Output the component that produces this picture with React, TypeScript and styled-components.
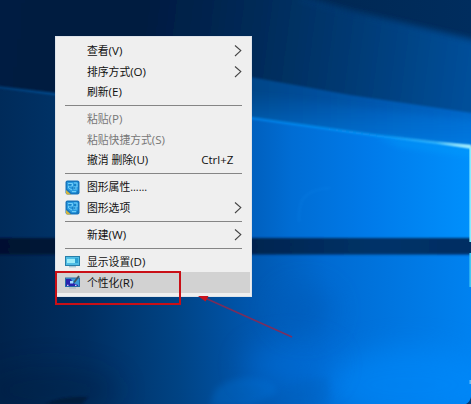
import React from "react";
import styled, { createGlobalStyle } from "styled-components";

const GlobalStyle = createGlobalStyle`
  html, body { margin: 0; padding: 0; overflow: hidden; }
`;

const Desktop = styled.main`
  position: relative;
  width: 471px;
  height: 404px;
  overflow: hidden;
  background: #002b5c;
  font-family: "Open Sans", "Noto Sans CJK SC", sans-serif;
`;

const WallpaperArt = styled.svg`
  position: absolute;
  inset: 0;
  display: block;
`;

const Menu = styled.ul`
  position: absolute;
  left: 55px;
  top: 36px;
  box-sizing: border-box;
  width: 196.5px;
  height: 261px;
  margin: 0;
  padding: 3.6px 1px 3px;
  border: 1px solid #dde3ea;
  background: #efefef;
  list-style: none;
  display: flex;
  flex-direction: column;
`;

const Row = styled.li<{ $active?: boolean; $disabled?: boolean }>`
  display: flex;
  align-items: center;
  flex: 0 0 20.65px;
  height: 20.65px;
  padding: 0 7.5px 0 8px;
  background: ${(p) => (p.$active ? "#d2d2d2" : "transparent")};
  color: ${(p) => (p.$disabled ? "#777" : "#111")};
  font-size: 10.8px;
  line-height: 20px;
  white-space: nowrap;
`;

const IconSlot = styled.span`
  display: flex;
  width: 22px;
  flex: none;
`;

const Label = styled.span`
  flex: 1;
`;

const AccessKey = styled.span`
  font-size: 11.6px;
  line-height: 1;
`;

const Hint = styled.span`
  margin-right: 8.5px;
  font-size: 11.6px;
`;

const Divider = styled.li`
  flex: 0 0 6.3px;
  display: flex;
  align-items: center;
  padding: 0 7.5px 0 8px;

  &::before {
    content: "";
    flex: 1;
    height: 1px;
    background: #858585;
  }
`;

const HighlightBox = styled.div`
  position: absolute;
  left: 55px;
  top: 271px;
  box-sizing: border-box;
  width: 126px;
  height: 34px;
  border: 2px solid #c90f16;
`;

const PointerArrow = styled.svg`
  position: absolute;
  left: 195px;
  top: 292px;
`;

function Wallpaper() {
  return (
    <WallpaperArt width="471" height="404" viewBox="0 0 471 404">
      <defs>
        <linearGradient id="night" x1="0" x2="471" y1="0" y2="0" gradientUnits="userSpaceOnUse">
          <stop offset="0" stopColor="#001c40" />
          <stop offset=".25" stopColor="#001739" />
          <stop offset=".55" stopColor="#00264f" />
          <stop offset="1" stopColor="#002d5e" />
        </linearGradient>
        <linearGradient id="ray" x1="0" x2="471" y1="0" y2="60" gradientUnits="userSpaceOnUse">
          <stop offset="0" stopColor="#001d42" />
          <stop offset=".3" stopColor="#001b40" />
          <stop offset=".55" stopColor="#002b59" />
          <stop offset=".75" stopColor="#003a74" />
          <stop offset="1" stopColor="#004f9a" />
        </linearGradient>
        <linearGradient id="beam" x1="251" x2="471" y1="0" y2="0" gradientUnits="userSpaceOnUse">
          <stop offset="0" stopColor="#004587" />
          <stop offset=".5" stopColor="#0055aa" />
          <stop offset="1" stopColor="#0068cb" />
        </linearGradient>
        <linearGradient id="glow" x1="0" x2="0" y1="0" y2="1">
          <stop offset="0" stopColor="#007de8" stopOpacity="0" />
          <stop offset="1" stopColor="#0084ee" stopOpacity=".8" />
        </linearGradient>
        <linearGradient id="pane" x1="0" x2="471" y1="0" y2="0" gradientUnits="userSpaceOnUse">
          <stop offset="0" stopColor="#002b5a" />
          <stop offset=".12" stopColor="#003266" />
          <stop offset=".53" stopColor="#005fbd" />
          <stop offset=".62" stopColor="#006dd4" />
          <stop offset=".78" stopColor="#007ae9" />
          <stop offset="1" stopColor="#0090fc" />
        </linearGradient>
        <linearGradient id="lower" x1="0" x2="471" y1="330" y2="300" gradientUnits="userSpaceOnUse">
          <stop offset="0" stopColor="#00234c" />
          <stop offset=".18" stopColor="#002e60" />
          <stop offset=".37" stopColor="#004384" />
          <stop offset=".53" stopColor="#0056ad" />
          <stop offset=".7" stopColor="#006bd2" />
          <stop offset="1" stopColor="#0082f0" />
        </linearGradient>
        <linearGradient id="bar" x1="0" x2="471" y1="0" y2="0" gradientUnits="userSpaceOnUse">
          <stop offset="0" stopColor="#001130" />
          <stop offset=".5" stopColor="#00224c" />
          <stop offset=".8" stopColor="#003368" />
          <stop offset="1" stopColor="#002d63" />
        </linearGradient>
        <linearGradient id="edge" x1="0" x2="471" y1="0" y2="0" gradientUnits="userSpaceOnUse">
          <stop offset="0" stopColor="#00417e" />
          <stop offset=".12" stopColor="#00529a" />
          <stop offset=".53" stopColor="#0085ee" />
          <stop offset=".82" stopColor="#0c9cfa" />
          <stop offset=".93" stopColor="#4cc8ff" />
          <stop offset="1" stopColor="#c5fbff" />
        </linearGradient>
        <filter id="soft1" filterUnits="userSpaceOnUse" x="-40" y="-40" width="560" height="500"><feGaussianBlur stdDeviation="1" /></filter>
        <filter id="soft3" filterUnits="userSpaceOnUse" x="-40" y="-40" width="560" height="500"><feGaussianBlur stdDeviation="3" /></filter>
        <filter id="soft12" filterUnits="userSpaceOnUse" x="-80" y="-40" width="660" height="560"><feGaussianBlur stdDeviation="14" /></filter>
      </defs>

      <rect width="471" height="404" fill="url(#night)" />
      <path d="M-20 -20H270L305 -2L350 12L400 23L490 44V260H-20Z" fill="url(#ray)" filter="url(#soft3)" />
      <path d="M300 -2Q385 22 475 42" fill="none" stroke="#00509a" strokeWidth="4" opacity=".3" filter="url(#soft3)" />
      <path d="M245 76L350 95L500 117V180H245Z" fill="url(#beam)" filter="url(#soft1)" />
      <path d="M245 92L350 106L490 122V160L370 140L245 120Z" fill="url(#glow)" filter="url(#soft3)" />
      <path d="M0 87L55 94L251 118L380 136L471 147V242H0Z" fill="url(#pane)" />
      <path d="M-10 86L55 94L251 118L380 136L480 148" fill="none" stroke="url(#edge)" strokeWidth="1.8" filter="url(#soft1)" />
      <path d="M375 136L480 150V158L400 147Z" fill="#00a4ff" opacity=".35" filter="url(#soft3)" />
      <path d="M436 142.5L471 145V148.5Z" fill="#b4faff" opacity=".8" filter="url(#soft1)" />
      <path d="M299 222C298 202 302 190 330 188" fill="none" stroke="#168bee" strokeWidth="3" opacity=".14" filter="url(#soft1)" />

      <rect y="250" width="471" height="154" fill="url(#lower)" />
      <ellipse cx="410" cy="385" rx="85" ry="38" fill="#008cff" opacity=".55" filter="url(#soft12)" />
      <ellipse cx="290" cy="365" rx="45" ry="22" fill="#0070de" opacity=".5" filter="url(#soft12)" />
      <ellipse cx="50" cy="390" rx="70" ry="24" fill="#001a3e" opacity=".35" filter="url(#soft12)" />
      <ellipse cx="305" cy="310" rx="30" ry="24" fill="#0059b5" opacity=".45" filter="url(#soft12)" />
      <path d="M215 390Q230 376 255 378Q280 382 276 394L250 406H210Z" fill="#007ce6" opacity=".25" filter="url(#soft3)" />
      <path d="M276 396L305 379L328 378L330 398L318 404H276Z" fill="#0060bd" opacity=".3" filter="url(#soft3)" />
      <path d="M45 404Q65 395 88 397L82 404Z" fill="#00142f" opacity=".6" filter="url(#soft1)" />

      <path d="M-20 238H500V254.5H-20Z" fill="url(#bar)" filter="url(#soft1)" />
      <path d="M470.2 147V242" stroke="#85edff" strokeWidth="1.6" />
      <path d="M470.2 253V287" stroke="#40c8f2" strokeWidth="1.6" />
      <path d="M469.5 381H471M469.5 383H471" stroke="#c6f5ff" />
      <path d="M471 397V404H466Q470 402 471 397Z" fill="#07396f" />
    </WallpaperArt>
  );
}

const GraphicsIcon = () => (
  <svg width="15" height="15" viewBox="0 0 15 15">
    <rect x=".5" y=".5" width="14" height="14" rx="2" fill="#1776bd" />
    <path d="M1 11V13Q1 14.5 3 14.5H6L1 10Z" fill="#d6b53b" />
    <path d="M2 2H13V10L11 13H7L2 9Z" fill="#2899df" />
    <path d="M3 3.5H7.5V6H3.5V8L7 10M9 3H12V7H8.5V9H12M7 11.5H11" fill="none" stroke="#70cdf7" strokeWidth="1" />
    <path d="M4 5H6M9 5H11M7 8H10" stroke="#0868ad" />
  </svg>
);

const DisplayIcon = () => (
  <svg width="15" height="13" viewBox="0 0 15 13">
    <rect x=".5" y="1.5" width="14" height="9" fill="#50bde5" stroke="#267ea9" />
    <path d="M2 4H10V8H2Z" fill="#9cecf8" />
    <path d="M10 3H13V8H10Z" fill="#2a9fd2" />
    <path d="M4 11.8H11" stroke="#8eb4c5" />
  </svg>
);

const PersonalizeIcon = () => (
  <svg width="15" height="15" viewBox="0 0 15 15">
    <rect x=".5" y="3" width="14" height="8.5" fill="#3c9bd7" stroke="#266caa" />
    <path d="M1 4H6L8 8L13 10V11H1Z" fill="#2922ad" />
    <path d="M5 6H8V8.5H5Z" fill="#a6d9ff" />
    <path d="M2 10.3H3.5M10 10.3H11.5" stroke="#fff" />
    <path d="M9 7.5L14 1" stroke="#42515b" strokeWidth="1.8" />
    <path d="M4 13H11" stroke="#a1b3bd" />
  </svg>
);

const Chevron = () => (
  <svg width="8" height="12" viewBox="0 0 8 12" fill="none" stroke="#444" strokeWidth="1.1">
    <path d="M1 .5L6.8 5.6L1 11" />
  </svg>
);

type ItemProps = {
  label: string;
  accessKey?: string;
  icon?: React.ReactNode;
  hint?: string;
  submenu?: boolean;
  disabled?: boolean;
  active?: boolean;
};

function Item({ label, accessKey, icon, hint, submenu, disabled, active }: ItemProps) {
  return (
    <Row $disabled={disabled} $active={active}>
      <IconSlot>{icon}</IconSlot>
      <Label>
        {label}
        {accessKey && <AccessKey>{`(${accessKey})`}</AccessKey>}
      </Label>
      {hint && <Hint>{hint}</Hint>}
      {submenu && <Chevron />}
    </Row>
  );
}

export default function App() {
  return (
    <Desktop>
      <GlobalStyle />
      <Wallpaper />
      <Menu>
        <Item label="查看" accessKey="V" submenu />
        <Item label="排序方式" accessKey="O" submenu />
        <Item label="刷新" accessKey="E" />
        <Divider />
        <Item label="粘贴" accessKey="P" disabled />
        <Item label="粘贴快捷方式" accessKey="S" disabled />
        <Item label="撤消 删除" accessKey="U" hint="Ctrl+Z" />
        <Divider />
        <Item label="图形属性......" icon={<GraphicsIcon />} />
        <Item label="图形选项" icon={<GraphicsIcon />} submenu />
        <Divider />
        <Item label="新建" accessKey="W" submenu />
        <Divider />
        <Item label="显示设置" accessKey="D" icon={<DisplayIcon />} />
        <Item label="个性化" accessKey="R" icon={<PersonalizeIcon />} active />
      </Menu>
      <HighlightBox />
      <PointerArrow width="102" height="50" viewBox="0 0 102 50">
        <path d="M10 6L97 45" stroke="#9a2448" strokeWidth="1.5" opacity=".8" />
        <path d="M3 4H13.5L10.5 9.5Z" fill="#c9131b" />
      </PointerArrow>
    </Desktop>
  );
}
